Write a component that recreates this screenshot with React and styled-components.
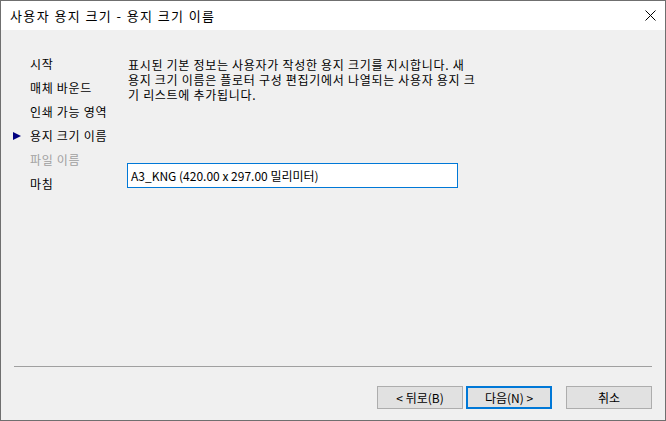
import React from 'react'
import styled, { createGlobalStyle, css } from 'styled-components'

const GlobalStyle = createGlobalStyle`
  html, body {
    margin: 0;
    padding: 0;
    background: #ffffff;
  }
  body {
    font-family: "Noto Sans CJK KR", "Noto Sans", sans-serif;
    font-size: 12px;
    color: #000;
  }
`

const Window = styled.div`
  width: 666px;
  height: 421px;
  box-sizing: border-box;
  border: 1px solid #6f6f6f;
  background: #f0f0f0;
  display: flex;
  flex-direction: column;
`

const TitleBar = styled.div`
  height: 29px;
  flex: none;
  background: #fff;
  display: flex;
  align-items: center;
  justify-content: space-between;
  padding: 0 9px 0 9px;
`

const Title = styled.span`
  font-size: 13px;
  line-height: 16px;
  letter-spacing: 1.4px;
`

const CloseButton = styled.div`
  width: 12px;
  height: 12px;
  display: flex;
  align-items: center;
  justify-content: center;
`

const Body = styled.div`
  flex: 1;
  display: flex;
  flex-direction: column;
`

const Content = styled.div`
  flex: 1;
  display: flex;
`

const Nav = styled.ul`
  width: 126px;
  flex: none;
  list-style: none;
  margin: 0;
  padding: 22px 0 0 0;
`

const NavItem = styled.li`
  position: relative;
  height: 24px;
  line-height: 24px;
  padding-left: 29px;
  letter-spacing: 0.7px;
  white-space: nowrap;
  color: ${p => (p.$disabled ? '#a0a0a0' : '#000')};

  ${p => p.$active && css`
    &::before {
      content: '';
      position: absolute;
      left: 12px;
      top: 50%;
      transform: translateY(-50%);
      border-left: 8px solid #000080;
      border-top: 4.5px solid transparent;
      border-bottom: 4.5px solid transparent;
    }
  `}
`

const Main = styled.div`
  flex: 1;
  padding-top: 27px;
`

const Description = styled.p`
  margin: 0 0 0 1px;
  line-height: 15px;
  letter-spacing: 0.7px;
  white-space: pre;
`

const NameBox = styled.div`
  margin-top: 61px;
  width: 331px;
  height: 25px;
  box-sizing: border-box;
  border: 1px solid #0078d7;
  background: #fff;
  display: flex;
  align-items: center;
  padding-left: 3px;
`

const Separator = styled.div`
  height: 1px;
  background: #a0a0a0;
  margin: 0 13px;
`

const ButtonRow = styled.div`
  display: flex;
  justify-content: flex-end;
  padding: 19px 13px 11px 0;
`

const Button = styled.button`
  width: 86px;
  height: 23px;
  box-sizing: border-box;
  font-family: inherit;
  font-size: 12px;
  color: #000;
  background: #e1e1e1;
  border: 1px solid #adadad;
  padding: 0;
  margin-left: ${p => p.$gap || 0}px;

  ${p => p.$default && css`
    border: 2px solid #0078d7;
  `}
`

const steps = [
  { label: '시작' },
  { label: '매체 바운드' },
  { label: '인쇄 가능 영역' },
  { label: '용지 크기 이름', active: true },
  { label: '파일 이름', disabled: true },
  { label: '마침' },
]

export default function App() {
  return (
    <>
      <GlobalStyle />
      <Window>
        <TitleBar>
          <Title>사용자 용지 크기 - 용지 크기 이름</Title>
          <CloseButton>
            <svg width="11" height="11" viewBox="0 0 11 11">
              <path d="M0.5 0.5 L10.5 10.5 M10.5 0.5 L0.5 10.5" stroke="#000" strokeWidth="1" fill="none" />
            </svg>
          </CloseButton>
        </TitleBar>
        <Body>
          <Content>
            <Nav>
              {steps.map(s => (
                <NavItem key={s.label} $active={s.active} $disabled={s.disabled}>
                  {s.label}
                </NavItem>
              ))}
            </Nav>
            <Main>
              <Description>
                {'표시된 기본 정보는 사용자가 작성한 용지 크기를 지시합니다. 새\n용지 크기 이름은 플로터 구성 편집기에서 나열되는 사용자 용지 크\n기 리스트에 추가됩니다.'}
              </Description>
              <NameBox>A3_KNG (420.00 x 297.00 밀리미터)</NameBox>
            </Main>
          </Content>
          <Separator />
          <ButtonRow>
            <Button>&lt; 뒤로(B)</Button>
            <Button $default $gap={3}>다음(N) &gt;</Button>
            <Button $gap={14}>취소</Button>
          </ButtonRow>
        </Body>
      </Window>
    </>
  )
}
